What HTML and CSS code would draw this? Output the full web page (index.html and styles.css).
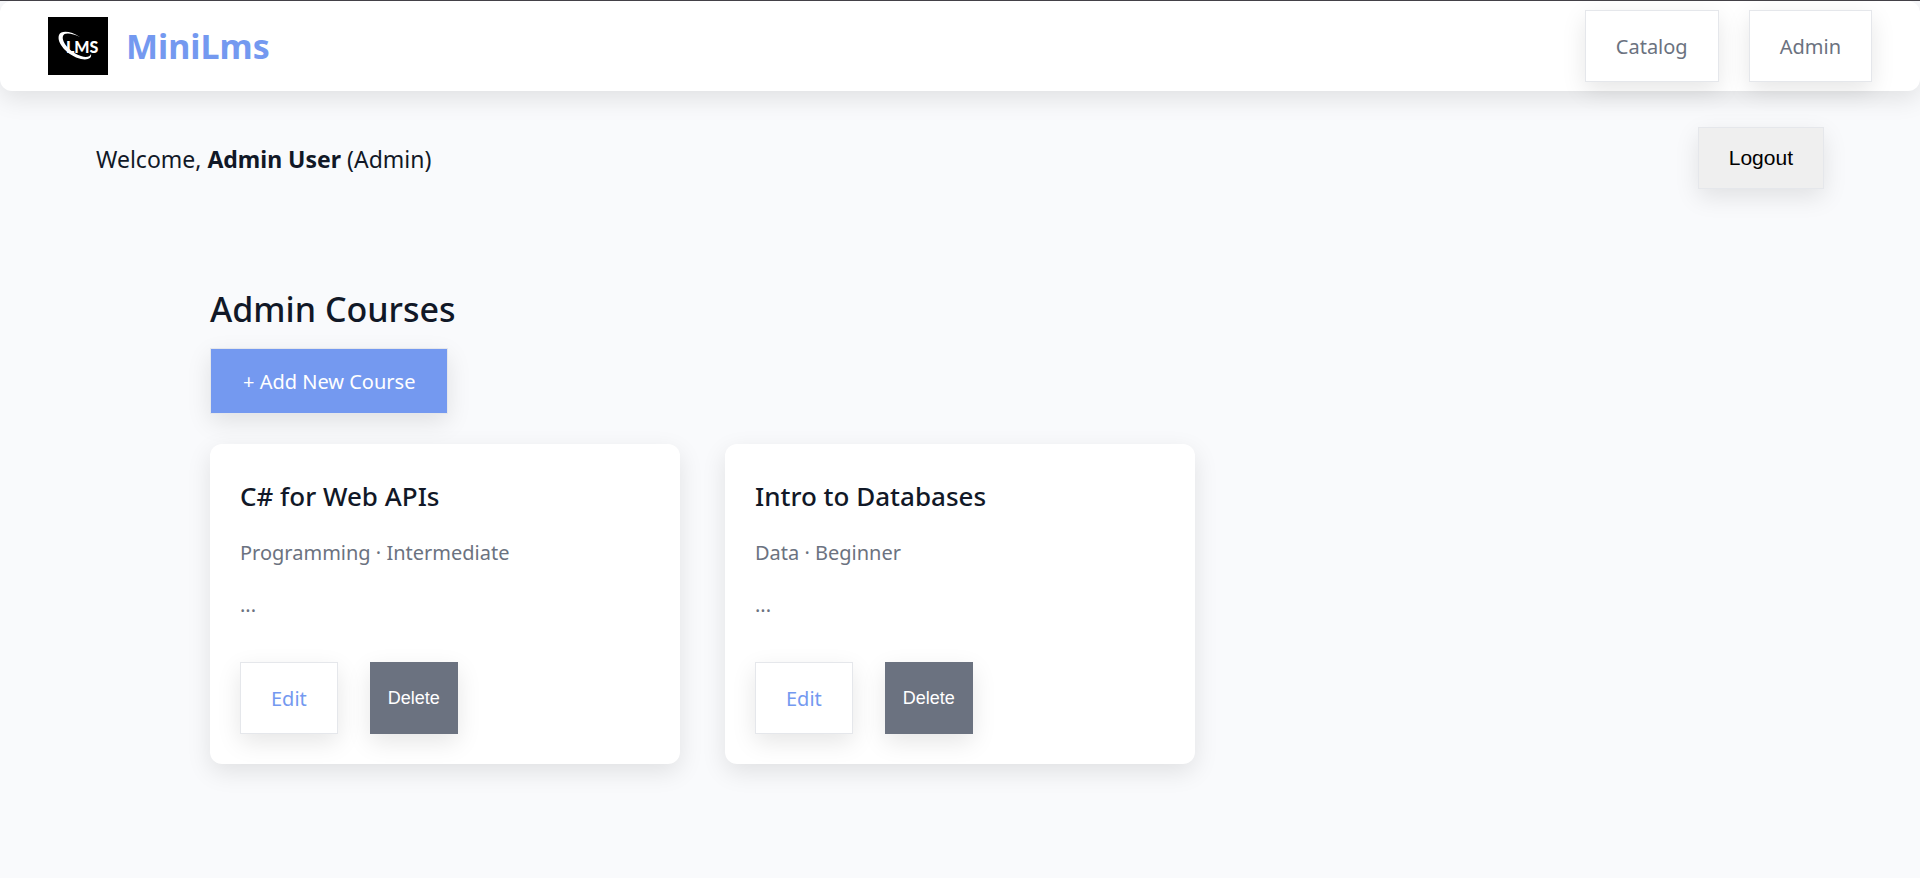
FILE: index.html
```html
<!DOCTYPE html>
<html lang="en">
<head>
<meta charset="utf-8">
<title>MiniLms</title>
<link rel="stylesheet" href="styles.css">
</head>
<body>
<header class="topbar">
  <a class="brand" href="#">
    <svg class="logo" viewBox="0 0 60 58" role="img" aria-label="LMS logo">
      <rect width="60" height="58" fill="#000"/>
      <text class="logo-text" x="18" y="36">LMS</text>
      <path d="M32 20C23 14 13 13 11 18C8 26 20 39 33 42C40 43.500 44 41 43 37C42 40 38 41 33 39C23 36 13 25 15 19C16 15 24 16 32 20Z" fill="#fff"/>
    </svg>
    <span class="brand-name">MiniLms</span>
  </a>
  <nav class="nav">
    <a class="btn" href="#">Catalog</a>
    <a class="btn" href="#">Admin</a>
  </nav>
</header>
<div class="userbar">
  <p class="welcome">Welcome, <strong>Admin User</strong> (Admin)</p>
  <button class="btn btn-logout" type="button">Logout</button>
</div>
<main class="main">
  <h1 class="title">Admin Courses</h1>
  <a class="btn btn-primary" href="#">+ Add New Course</a>
  <div class="cards">
    <article class="card">
      <h2 class="card-title">C# for Web APIs</h2>
      <p class="card-text">Programming · Intermediate</p>
      <p class="card-text">...</p>
      <div class="actions">
        <a class="btn btn-edit" href="#">Edit</a>
        <button class="btn btn-delete" type="button">Delete</button>
      </div>
    </article>
    <article class="card">
      <h2 class="card-title">Intro to Databases</h2>
      <p class="card-text">Data · Beginner</p>
      <p class="card-text">...</p>
      <div class="actions">
        <a class="btn btn-edit" href="#">Edit</a>
        <button class="btn btn-delete" type="button">Delete</button>
      </div>
    </article>
  </div>
</main>
</body>
</html>
```
FILE: styles.css
```css
* { box-sizing: border-box; }
body {
  margin: 0;
  border-top: 1px solid #434147;
  background: #f9fafc;
  color: #111827;
  font-family: "Segoe UI", "Noto Sans", sans-serif;
  font-size: 20px;
  line-height: 32px;
}
h1, h2, p { margin: 0; }
.topbar {
  display: flex;
  justify-content: space-between;
  align-items: center;
  padding: 9px 48px;
  background: #fff;
  border-radius: 12px;
  box-shadow: 0 8px 24px rgba(0, 0, 0, 0.1);
}
.brand {
  display: flex;
  align-items: center;
  gap: 18px;
  text-decoration: none;
}
.logo { width: 60px; height: 58px; }
.logo-text {
  fill: #fff;
  font: 900 16px Lato, sans-serif;
}
.brand-name {
  color: #7499f0;
  font-size: 34px;
  font-weight: 700;
}
.nav { display: flex; gap: 30px; }
.btn {
  display: inline-block;
  padding: 20px 30px 18px;
  border: 1px solid #e5e7eb;
  background: #fff;
  color: #6b7280;
  text-decoration: none;
  box-shadow: 0 8px 24px rgba(0, 0, 0, 0.1);
}
.userbar {
  display: flex;
  justify-content: space-between;
  align-items: center;
  padding: 36px 96px 0;
}
.welcome {
  padding-top: 2px;
  font-size: 23px;
}
.btn-logout {
  padding: 18px 30px;
  background: #efefef;
  color: #000;
  font: 21px/24px "Liberation Sans", Arial, sans-serif;
}
.main {
  max-width: 1500px;
  margin: 0 auto;
  padding: 96px 0 48px;
}
.title {
  margin-bottom: 15px;
  font-size: 34px;
  font-weight: 500;
  line-height: 48px;
}
.btn-primary {
  padding: 17px 32px 15px;
  background: #7499f0;
  color: #fff;
}
.cards {
  display: grid;
  grid-template-columns: repeat(3, 1fr);
  gap: 45px;
  margin-top: 30px;
}
.card {
  padding: 30px;
  background: #fff;
  border-radius: 12px;
  box-shadow: 0 8px 24px rgba(0, 0, 0, 0.1);
}
.card-title {
  margin-bottom: 19px;
  font-size: 26px;
  font-weight: 500;
  line-height: 44px;
}
.card-text {
  margin-bottom: 20px;
  color: #6b7280;
}
.actions {
  display: flex;
  gap: 32px;
  padding-top: 21px;
}
.btn-edit { color: #7499f0; }
.btn-delete {
  padding: 0 17px;
  border-color: #6b7280;
  background: #6b7280;
  color: #fff;
  font: 18px/24px "Liberation Sans", Arial, sans-serif;
}
```
